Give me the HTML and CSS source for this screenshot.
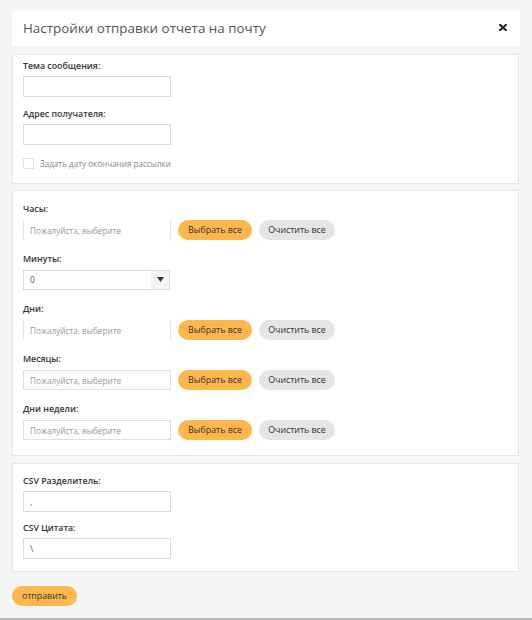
FILE: index.html
```html
<!DOCTYPE html>
<html lang="ru">
<head>
<meta charset="utf-8">
<title>Настройки отправки отчета на почту</title>
<link rel="stylesheet" href="styles.css">
</head>
<body>
<div class="page">
  <div class="header">
    <span class="title">Настройки отправки отчета на почту</span>
    <svg class="close" width="8" height="7" viewBox="0 0 8 7"><path d="M1 0.8L7 6.2M7 0.8L1 6.2" stroke="#222" stroke-width="2" stroke-linecap="square"/></svg>
  </div>

  <div class="card card-first">
    <div class="group">
      <div class="label">Тема сообщения:</div>
      <div class="input input-tall"></div>
    </div>
    <div class="group">
      <div class="label">Адрес получателя:</div>
      <div class="input input-tall"></div>
    </div>
    <div class="check-row">
      <span class="checkbox"></span>
      <span class="check-label">Задать дату окончания рассылки</span>
    </div>
  </div>

  <div class="card card-mid">
    <div class="group">
      <div class="label">Часы:</div>
      <div class="multi-row">
        <div class="multi multi-open">Пожалуйста, выберите</div>
        <span class="btn btn-orange">Выбрать все</span>
        <span class="btn btn-gray">Очистить все</span>
      </div>
    </div>
    <div class="group">
      <div class="label">Минуты:</div>
      <div class="select">
        <span class="select-value">0</span>
        <span class="select-arrow"><svg width="7" height="5" viewBox="0 0 7 5"><path d="M0 0H7L3.5 5Z" fill="#333"/></svg></span>
      </div>
    </div>
    <div class="group">
      <div class="label">Дни:</div>
      <div class="multi-row">
        <div class="multi multi-open">Пожалуйста, выберите</div>
        <span class="btn btn-orange">Выбрать все</span>
        <span class="btn btn-gray">Очистить все</span>
      </div>
    </div>
    <div class="group">
      <div class="label">Месяцы:</div>
      <div class="multi-row">
        <div class="multi">Пожалуйста, выберите</div>
        <span class="btn btn-orange">Выбрать все</span>
        <span class="btn btn-gray">Очистить все</span>
      </div>
    </div>
    <div class="group">
      <div class="label">Дни недели:</div>
      <div class="multi-row">
        <div class="multi">Пожалуйста, выберите</div>
        <span class="btn btn-orange">Выбрать все</span>
        <span class="btn btn-gray">Очистить все</span>
      </div>
    </div>
  </div>

  <div class="card card-last">
    <div class="group">
      <div class="label">CSV Разделитель:</div>
      <div class="input input-tall">,</div>
    </div>
    <div class="group">
      <div class="label">CSV Цитата:</div>
      <div class="input input-tall">\</div>
    </div>
  </div>

  <div class="actions">
    <span class="btn btn-orange btn-submit">отправить</span>
  </div>
</div>
</body>
</html>
```

FILE: styles.css
```css
html, body {
  margin: 0;
  padding: 0;
}
body {
  background: #f5f5f5;
  font-family: "Open Sans", "Liberation Sans", sans-serif;
  min-height: 100vh;
  box-sizing: border-box;
  border-bottom: 2px solid #b9b9b9;
}
.page {
  padding: 11px 12px 0 12px;
  display: flex;
  flex-direction: column;
}
.header {
  background: #fff;
  height: 35px;
  display: flex;
  align-items: center;
  justify-content: space-between;
  padding: 0 13px 0 11px;
}
.title {
  font-size: 13.4px;
  color: #555;
  font-weight: 400;
  line-height: 1;
  padding-top: 1px;
}
.close {
  display: block;
  margin-top: -2px;
}
.card {
  background: #fff;
  border: 1px solid #e6e6e6;
  padding: 12px 10px 15px 10px;
  margin-top: 7px;
  display: flex;
  flex-direction: column;
  width: 485px;
}
.card-first {
  margin-top: 8px;
  padding-top: 5px;
  padding-bottom: 14px;
  gap: 11px;
}
.card-mid {
  margin-top: 6px;
  gap: 13px;
}
.card-last {
  padding-top: 11px;
  padding-bottom: 12px;
  gap: 10px;
}
.group {
  display: flex;
  flex-direction: column;
}
.label {
  font-size: 8.8px;
  line-height: 12px;
  font-weight: 600;
  color: #333;
  margin-bottom: 4px;
}
.card-mid .label {
  margin-bottom: 5px;
}
.input {
  width: 148px;
  height: 20px;
  box-sizing: border-box;
  border: 1px solid #dcdcdc;
  background: #fff;
  font-size: 9px;
  color: #666;
  padding-left: 6px;
  line-height: 18px;
}
.input-tall {
  height: 21px;
  line-height: 20px;
}
.check-row {
  display: flex;
  align-items: center;
  margin-top: 2px;
  gap: 6px;
}
.checkbox {
  width: 11px;
  height: 11px;
  box-sizing: border-box;
  border: 1px solid #e2e2e2;
  background: #fff;
}
.check-label {
  font-size: 8.1px;
  color: #888;
  line-height: 11px;
}
.multi-row {
  display: flex;
  align-items: center;
  gap: 7px;
}
.multi {
  width: 148px;
  height: 20px;
  box-sizing: border-box;
  border: 1px solid #dfdfdf;
  font-size: 8.2px;
  color: #999;
  padding-left: 6px;
  line-height: 19px;
}
.multi-open {
  border-top-color: #fff;
  border-bottom-color: #fff;
  border-left-color: #e6e6e6;
  border-right-color: #e6e6e6;
}
.btn {
  display: inline-flex;
  align-items: center;
  justify-content: center;
  height: 20px;
  border-radius: 10px;
  font-size: 8.8px;
  color: #333;
  box-sizing: border-box;
}
.btn-orange {
  background: #ffb74d;
  width: 74px;
}
.btn-gray {
  background: #e5e5e5;
  width: 76px;
}
.select {
  width: 147px;
  height: 20px;
  box-sizing: border-box;
  border: 1px solid #dcdcdc;
  display: flex;
  align-items: stretch;
}
.select-value {
  flex: 1;
  font-size: 8.5px;
  color: #555;
  padding-left: 6px;
  line-height: 18px;
}
.select-arrow {
  width: 18px;
  background: #f4f4f4;
  display: flex;
  align-items: center;
  justify-content: center;
}
.select-arrow svg {
  display: block;
  margin-top: -2px;
}
.actions {
  display: flex;
  margin-top: 14px;
}
.btn-submit {
  width: 65px;
}
```
